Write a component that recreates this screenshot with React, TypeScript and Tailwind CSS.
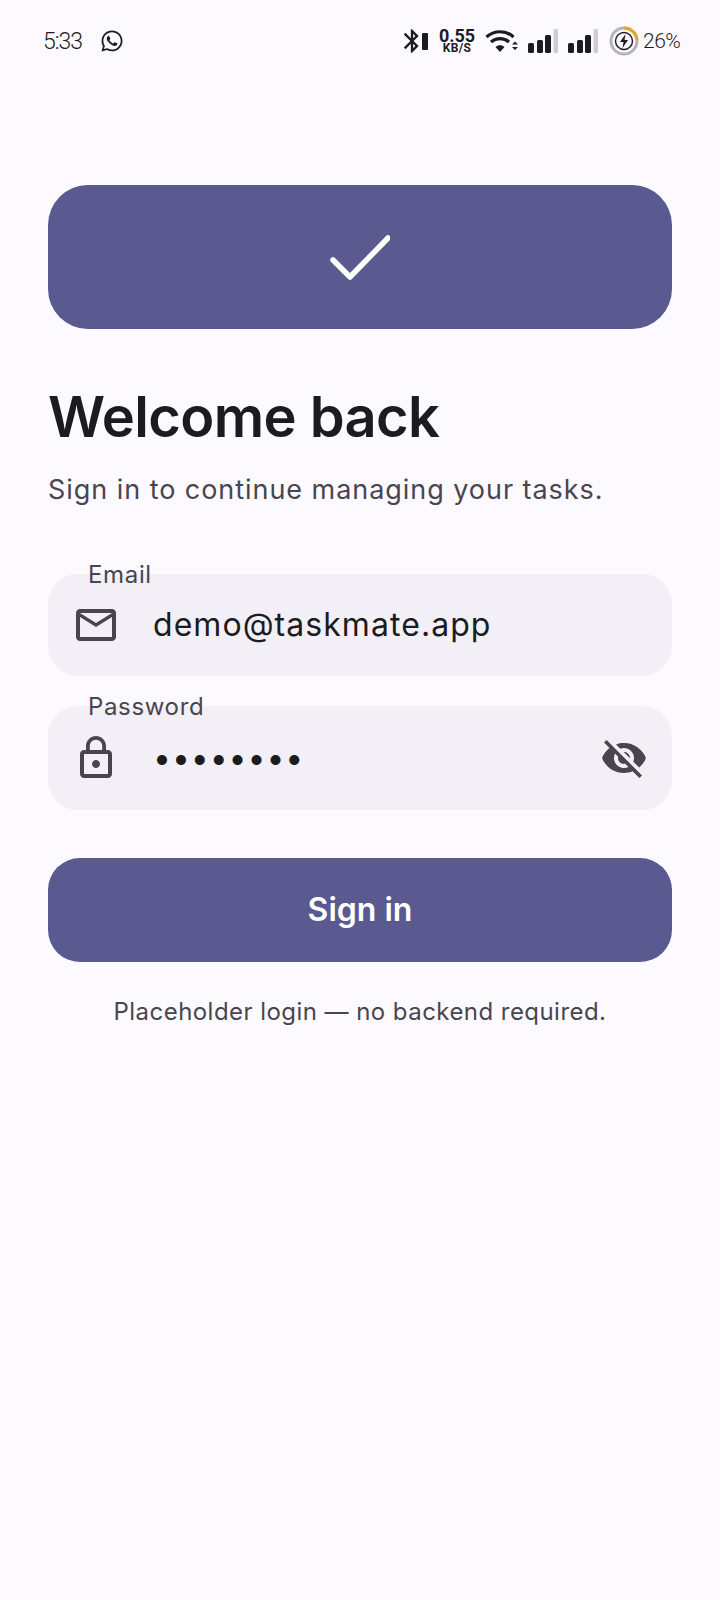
import { MdMailOutline, MdLockOutline, MdVisibilityOff, MdBluetooth } from "react-icons/md";
import { FaWhatsapp } from "react-icons/fa";

const font = { fontFamily: "Inter, sans-serif" };
const roboto = { fontFamily: "Roboto, sans-serif" };

function Signal() {
  return (
    <svg width="30" height="24" viewBox="0 0 30 24" className="block">
      <rect x="0" y="14" width="6" height="10" rx="1.5" fill="#1c1b1f" />
      <rect x="9" y="11" width="6" height="13" rx="1.5" fill="#1c1b1f" />
      <rect x="17" y="6" width="6" height="18" rx="1.5" fill="#1c1b1f" />
      <rect x="25.5" y="0" width="4.5" height="24" rx="1" fill="#cfcfd2" />
    </svg>
  );
}

function StatusBar() {
  return (
    <div className="flex h-[82px] items-center justify-between pl-[43px] pr-[41px] text-[#1c1b1f]">
      <div className="flex items-center gap-[18px]">
        <span style={roboto} className="w-[39px] whitespace-nowrap text-[23px] font-light leading-none tracking-[-1px]">5:33</span>
        <FaWhatsapp className="h-[24px] w-[24px]" />
      </div>
      <div className="flex items-center">
        <MdBluetooth className="h-[28px] w-[28px]" />
        <div className="ml-[-4px] h-[17px] w-[6px] rounded-[1px] bg-[#1c1b1f]" />
        <div style={roboto} className="ml-[10px] flex w-[38px] flex-col items-center font-bold leading-none">
          <span className="text-[18px] leading-[14px]">0.55</span>
          <span className="text-[12px] leading-[11px] tracking-[0.3px]">KB/S</span>
        </div>
        <svg width="33" height="24" viewBox="0 0 33 24" className="ml-[9px] block">
          <path d="M1.5 8C9 1 21 1 28.5 8" fill="none" stroke="#1c1b1f" strokeWidth="3.2" />
          <path d="M6 13C11 8.5 19 8.5 24 13" fill="none" stroke="#1c1b1f" strokeWidth="3.2" />
          <path d="M10.5 18C13 15.5 17 15.5 19.5 18L15 23Z" fill="#1c1b1f" />
          <path d="M27 15.5L30 12.5L33 15.5ZM27 18L30 21L33 18Z" fill="#1c1b1f" />
        </svg>
        <div className="ml-[10px]"><Signal /></div>
        <div className="ml-[10px]"><Signal /></div>
        <svg width="30" height="30" viewBox="0 0 30 30" className="ml-[11px] block">
          <circle cx="15" cy="15" r="13" fill="none" stroke="#b5b5b8" strokeWidth="3" />
          <path d="M15 2A13 13 0 0 1 28 14" fill="none" stroke="#e2a91f" strokeWidth="3" />
          <circle cx="15" cy="15" r="8.5" fill="none" stroke="#1c1b1f" strokeWidth="1.4" />
          <path d="M16.5 8L11 16H14.5L13.5 22L19 14H15.5Z" fill="#1c1b1f" />
        </svg>
        <span style={roboto} className="ml-[4px] w-[36px] whitespace-nowrap text-[21px] font-light leading-none tracking-[-0.5px]">26%</span>
      </div>
    </div>
  );
}

function Field({ label, icon, trailing, children, className }: { label: string; icon: React.ReactNode; trailing?: React.ReactNode; children: React.ReactNode; className: string }) {
  return (
    <div className={`relative flex items-center rounded-[30px] bg-[#f2f0f6] pl-[24px] pr-[24px] ${className}`}>
      <span className="absolute left-[40px] top-[-13px] text-[24px] leading-[28px] tracking-[0.65px] text-[#49454f]">{label}</span>
      <div className="flex h-[48px] w-[48px] shrink-0 items-center justify-center text-[#49454f]">{icon}</div>
      <div className="ml-[33px] flex-1">{children}</div>
      {trailing}
    </div>
  );
}

export default function App() {
  return (
    <div style={font} className="min-h-[1600px] w-[720px] bg-[#fcf9ff]">
      <StatusBar />
      <div className="flex flex-col px-[48px] pt-[103px]">
        <div className="flex h-[144px] items-center justify-center rounded-[40px] bg-[#5a5990]">
          <svg width="60" height="46" viewBox="0 0 60 46" fill="none" className="block">
            <path d="M3 26L20 43L58 4" stroke="#fff" strokeWidth="5.5" strokeLinecap="round" strokeLinejoin="round" />
          </svg>
        </div>
        <h1 className="mt-[54px] text-[56px] font-semibold leading-[68px] tracking-[-0.6px] text-[#1c1b1f]">Welcome back</h1>
        <p className="mt-[21px] text-[27px] leading-[36px] tracking-[0.95px] text-[#49454f]">Sign in to continue managing your tasks.</p>
        <Field label="Email" className="mt-[66px] h-[102px]" icon={<MdMailOutline className="h-[48px] w-[48px]" />}>
          <span className="text-[32px] leading-[40px] tracking-[1.05px] text-[#1c1b1f]">demo@taskmate.app</span>
        </Field>
        <Field
          label="Password"
          className="mt-[30px] h-[104px]"
          icon={<MdLockOutline className="h-[48px] w-[48px]" />}
          trailing={<MdVisibilityOff className="h-[48px] w-[48px] shrink-0 text-[#49454f]" />}
        >
          <span className="text-[32px] leading-[40px] tracking-[0.9px] text-[#1c1b1f]">••••••••</span>
        </Field>
        <button className="mt-[48px] flex h-[104px] items-center justify-center rounded-[32px] bg-[#5a5990] text-[32px] font-semibold text-white">Sign in</button>
        <p className="mt-[32px] text-center text-[24px] leading-[36px] tracking-[0.45px] text-[#49454f]">Placeholder login — no backend required.</p>
      </div>
    </div>
  );
}
